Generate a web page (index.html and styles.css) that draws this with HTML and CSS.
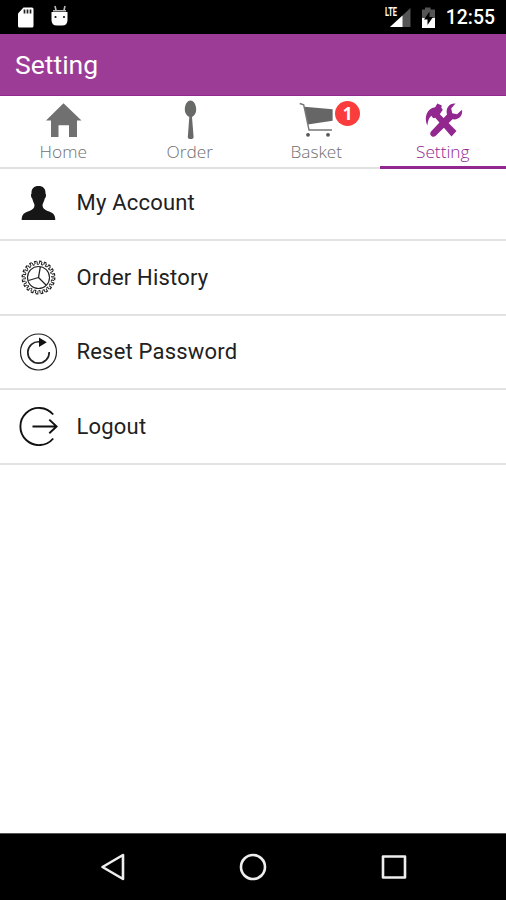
FILE: index.html
```html
<!DOCTYPE html>
<html lang="en">

<head>
  <meta charset="UTF-8">
  <meta name="viewport" content="width=device-width, initial-scale=1.0">
  <title>Setting</title>
  <link rel="stylesheet" href="styles.css">
</head>

<body>

<!-- Status bar -->
<div class="statusbar">
  <svg class="notifications" width="60" height="34" viewBox="0 0 60 34">
    <path fill="#fff" d="M6.500 7.500H15Q16.500 7.500 16.500 9V26Q16.500 27.500 15 27.500H2.500Q1 27.500 1 26V13.500z"/>
    <path stroke="#222" stroke-width="1.700" d="M7.500 9.500v4M10.500 9.500v4M13.500 9.500v4"/>
    <path fill="#fff" d="M34.500 12H50.500V20Q50.500 25.500 45 25.500H40Q34.500 25.500 34.500 20z"/>
    <path stroke="#bbb" stroke-width="1.600" fill="none" d="M38 6l1.200 5M48 6l-1.200 5M36 10.800h13"/>
    <circle cx="38.500" cy="17" r="1.100" fill="#111"/>
    <circle cx="47" cy="17" r="1.100" fill="#111"/>
  </svg>
  <div class="system">
    <span class="lte">LTE</span>
    <svg width="50" height="34" viewBox="0 0 50 34">
      <path fill="#555" d="M25.500 8V27H5z"/>
      <path fill="#fff" d="M17.500 15.500V27H5z"/>
      <path fill="#555" d="M37 9.500h3V7.500h5.500v2H50V18H37z"/>
      <path fill="#fff" d="M37 18h13v10H37z"/>
      <path fill="#000" d="M44.500 11.500L39 19.500h3.500V25L48 17h-3.500z"/>
    </svg>
    <span class="time">12:55</span>
  </div>
</div>

<div class="header">
  <h1>Setting</h1>
</div>

<!-- Tabs -->
<div class="tabs">
  <a href="#">
    <svg width="44" height="40" viewBox="0 0 44 40">
      <path fill="#707070" d="M22.500 3.200L40.500 20.500H36V37H28V25.200H17.500V37H10V20.500H5z"/>
    </svg>
    <span>Home</span>
  </a>
  <a href="#">
    <svg width="44" height="40" viewBox="0 0 44 40">
      <path fill="#686a68" d="M22.500 .5C26 .5 28.200 5 28.200 9.500C28.200 13 26.500 15.600 24 17L25.600 37Q25.600 39 22.700 39Q19.800 39 19.800 37L21.300 17C18.500 15.500 16.800 13 16.800 9.500C16.800 5 19 .5 22.500 .5z"/>
    </svg>
    <span>Order</span>
  </a>
  <a href="#">
    <svg width="44" height="40" viewBox="0 0 44 40">
      <path fill="#666" d="M10.400 6.700L38.600 9.300V20.700L13.700 24.600z"/>
      <path fill="none" stroke="#777" stroke-width="1.400" d="M5.700 3.500L9.700 4.800L15 30H38"/>
      <circle cx="14" cy="34.800" r="1.900" fill="#555"/>
      <circle cx="34" cy="34.800" r="1.900" fill="#555"/>
    </svg>
    <span>Basket</span>
    <b class="badge">1</b>
  </a>
  <a class="active" href="#">
    <svg width="44" height="40" viewBox="0 0 44 40" fill="#92278f">
      <!-- hammer -->
      <path d="M6.300 25.500C2.800 18 5.500 8.500 14.200 7.300L16.300 3.500L20.800 5.500L20.300 7.800L21.800 9.800L18.800 14.200L35.500 31L30.500 36.500L14.300 17.800L12.300 18.300L10.300 15.800C7.500 18 7 21.500 6.300 25.500z"/>
      <!-- wrench -->
      <path d="M34.500 3.500L30.200 8.500L31.300 13.300L36 14.200L41 9.800C42 15.500 38 20.300 31.500 19.300L14.500 36C11.500 38.500 7.500 34.500 10 31.500L26 14.500C24.300 8 28.500 3 34.500 3.500z"/>
    </svg>
    <span>Setting</span>
  </a>
</div>

<!-- Settings list -->
<ul class="list">
  <li>
    <svg width="40" height="40" viewBox="0 0 40 40">
      <path fill="#161616" d="M20.500 4C25 4 27.800 6.500 27.500 11.500C28.500 12.500 28 15.500 26.800 16.500C26 19.500 25 21 24.500 23C24.500 26 26 27.500 29.500 29C34.500 30.500 37.300 32 37.300 38H3.700C3.700 32 6.500 30.500 11.500 29C15 27.500 16.500 26 16.500 23C16 21 15 19.500 14.200 16.500C13 15.500 12.500 12.500 13.500 11.500C13.200 6.500 16 4 20.500 4z"/>
    </svg>
    <span>My Account</span>
  </li>
  <li>
    <svg width="40" height="40" viewBox="0 0 40 40" fill="none" stroke="#222">
      <circle cx="20.500" cy="20.500" r="16.300" stroke-width="1.300" stroke-dasharray="2.700 2.420"/>
      <circle cx="20.500" cy="20.500" r="14.800" stroke-width="2.200" stroke-dasharray="1 1.325"/>
      <circle cx="20.500" cy="20.500" r="13.300" stroke-width="1.100" stroke-dasharray="2.100 2.080" stroke-dashoffset="2.100"/>
      <circle cx="20.500" cy="20.500" r="11" stroke-width="1.100"/>
      <path stroke-width="1.300" d="M20.500 20.500L22.300 10M20.500 20.500L10.500 23.500M20.500 20.500L28 28"/>
    </svg>
    <span>Order History</span>
  </li>
  <li>
    <svg width="40" height="40" viewBox="0 0 40 40" fill="none" stroke="#222">
      <circle cx="20.500" cy="20" r="18" stroke-width="1.200"/>
      <path stroke-width="1.700" d="M31.200 20A10.700 10.700 0 1 1 21.500 9.800"/>
      <path fill="#111" stroke="none" d="M21 5.500L28.800 10.300L21 15z"/>
    </svg>
    <span>Reset Password</span>
  </li>
  <li>
    <svg width="40" height="40" viewBox="0 0 40 40" fill="none" stroke="#111" stroke-width="1.900">
      <path d="M35.200 8.500A18.600 18.600 0 1 0 35.200 32.500"/>
      <path d="M14.500 20.500H38.800M31.300 13.600L38.600 20.500L31.300 27.300"/>
    </svg>
    <span>Logout</span>
  </li>
</ul>

<!-- Navigation bar -->
<div class="navbar">
  <svg width="28" height="28" viewBox="0 0 28 28"><path d="M3.500 14L24 2V26z"/></svg>
  <svg width="28" height="28" viewBox="0 0 28 28"><circle cx="14" cy="14" r="12"/></svg>
  <svg width="28" height="28" viewBox="0 0 28 28"><rect x="3" y="3.500" width="22" height="21"/></svg>
</div>

</body>
</html>
```

FILE: styles.css
```css
* {
  box-sizing: border-box;
}

body {
  margin: 0;
  height: 900px;
  display: flex;
  flex-direction: column;
  background-color: #fff;
  font-family: Roboto, sans-serif;
  overflow: hidden;
}

svg {
  display: block;
}

/* Status bar */
.statusbar {
  height: 34px;
  padding: 0 11px 0 17px;
  display: flex;
  justify-content: space-between;
  background-color: #000;
  color: #fff;
}

.system {
  display: flex;
}

.lte {
  width: 0;
  margin-top: 5px;
  font-size: 12px;
  font-weight: bold;
  line-height: 14px;
  transform: scaleX(0.62);
  transform-origin: left;
}

.time {
  margin-left: 11px;
  padding-top: 1px;
  font-size: 19.4px;
  font-weight: 500;
  line-height: 34px;
}

.header {
  height: 62px;
  padding-left: 15px;
  background-color: #9c3c96;
  border-bottom: 1px solid #92278f;
}

h1 {
  margin: 0;
  color: #fff;
  font-size: 26.5px;
  font-weight: normal;
  line-height: 61px;
}

/* Tabs */
.tabs {
  height: 73px;
  display: grid;
  grid-template-columns: repeat(4, 1fr);
}

.tabs a {
  position: relative;
  padding-top: 4px;
  display: flex;
  flex-direction: column;
  align-items: center;
  border-bottom: 2px solid #e0e0e0;
  color: #707070;
  font-family: "Open Sans", sans-serif;
  font-size: 17.3px;
  font-weight: 300;
  line-height: 24px;
  text-decoration: none;
}

.tabs a.active {
  color: #92278f;
  border-bottom: 3px solid #92278f;
}

.badge {
  position: absolute;
  top: 5px;
  left: 82px;
  width: 25px;
  height: 25px;
  border-radius: 50%;
  background-color: #fa3c3c;
  color: #fff;
  font-size: 17px;
  font-weight: bold;
  line-height: 25px;
  text-align: center;
}

/* List */
.list {
  flex: 1;
  margin: 0;
  padding: 0;
  list-style: none;
}

.list li {
  height: 74.5px;
  padding: 0 18px;
  display: flex;
  align-items: center;
  gap: 18.5px;
  border-bottom: 2px solid #e2e2e2;
  color: #212121;
  font-size: 22px;
  letter-spacing: 0.2px;
}

.list li:first-child {
  height: 72px;
  padding-bottom: 4px;
}

/* Navigation bar */
.navbar {
  height: 67px;
  display: flex;
  justify-content: center;
  align-items: center;
  gap: 112.5px;
  background-color: #000;
  border-top: 1px solid #555;
}

.navbar svg {
  fill: none;
  stroke: #eee;
  stroke-width: 2.6px;
  stroke-linejoin: round;
}
```
